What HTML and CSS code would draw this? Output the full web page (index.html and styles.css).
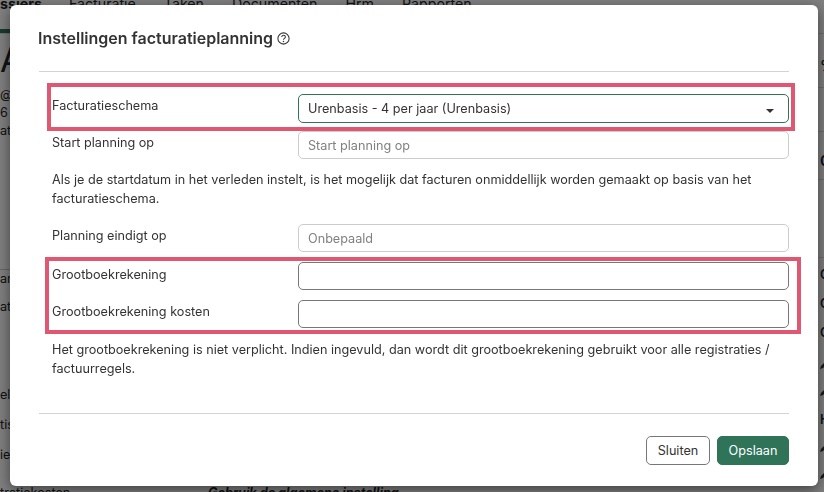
FILE: index.html
```html
<!DOCTYPE html>
<html lang="nl">
<head>
  <meta charset="UTF-8" />
  <title>Instellingen facturatieplanning</title>
  <link rel="stylesheet" href="styles.css">
</head>
<body>
  <div class="page">
    <nav class="topnav">
      <a class="active">ssiers</a>
      <a>Facturatie</a>
      <a>Taken</a>
      <a>Documenten</a>
      <a>Hrm</a>
      <a>Rapporten</a>
    </nav>

    <div class="page-main">
      <div class="side-left">
        <div class="left-title">A</div>
        <div class="left-info">
          <div>@a</div>
          <div>6</div>
          <div>at</div>
        </div>
        <div class="left-rows">
          <div>an</div>
          <div>at</div>
        </div>
        <div class="left-rows left-rows-low">
          <div>el</div>
          <div>tis</div>
          <div>ie</div>
        </div>
      </div>
      <div class="side-right">
        <div class="right-cell right-cell-a">%</div>
        <div class="right-cell right-cell-b"></div>
        <div class="right-cell right-cell-c">0</div>
        <div class="right-cell right-cell-d"></div>
        <div class="right-list">
          <div>G</div>
          <div>G</div>
          <div>G</div>
        </div>
        <div class="right-tools">
          <svg class="pen" viewBox="0 0 10 10"><path d="M1 9l1-3 4-4 2 2-4 4z" /></svg>
          <svg class="pen" viewBox="0 0 10 10"><path d="M1 9l1-3 4-4 2 2-4 4z" /></svg>
          <div class="right-head">H</div>
          <svg class="pen" viewBox="0 0 10 10"><path d="M1 9l1-3 4-4 2 2-4 4z" /></svg>
          <svg class="pen" viewBox="0 0 10 10"><path d="M1 9l1-3 4-4 2 2-4 4z" /></svg>
        </div>
      </div>
    </div>

    <div class="page-bottom">
      <span class="bottom-label">tratiekosten</span>
      <span class="bottom-value">Gebruik de algemene instelling</span>
    </div>
  </div>

  <div class="backdrop"></div>

  <div class="modal">
    <div class="modal-header">
      <h2>Instellingen facturatieplanning</h2>
      <svg class="help-icon" viewBox="0 0 16 16">
        <circle cx="8" cy="8" r="6.9" />
        <path d="M5.8 6.2c0-1.3 1-2.1 2.3-2.1s2.2.8 2.2 1.9c0 1.7-2.3 1.8-2.3 3.5" />
        <circle class="help-dot" cx="8" cy="11.6" r="0.9" />
      </svg>
    </div>

    <div class="modal-body">
      <div class="form-row">
        <label>Facturatieschema</label>
        <div class="select">
          <span>Urenbasis - 4 per jaar (Urenbasis)</span>
          <i class="caret"></i>
        </div>
      </div>
      <div class="form-row form-row-start">
        <label>Start planning op</label>
        <input type="text" placeholder="Start planning op" />
      </div>
      <p class="note">Als je de startdatum in het verleden instelt, is het mogelijk dat facturen onmiddellijk worden gemaakt op basis van het facturatieschema.</p>
      <div class="form-row">
        <label>Planning eindigt op</label>
        <input type="text" placeholder="Onbepaald" />
      </div>
      <div class="form-row form-row-ledger">
        <label class="label-low">Grootboekrekening</label>
        <input class="strong" type="text" />
      </div>
      <div class="form-row form-row-ledger">
        <label>Grootboekrekening kosten</label>
        <input class="strong" type="text" />
      </div>
      <p class="note note-ledger">Het grootboekrekening is niet verplicht. Indien ingevuld, dan wordt dit grootboekrekening gebruikt voor alle registraties / factuurregels.</p>
    </div>

    <div class="modal-footer">
      <button class="btn-close">Sluiten</button>
      <button class="btn-save">Opslaan</button>
    </div>

    <div class="mark mark-schema"></div>
    <div class="mark mark-ledger"></div>
  </div>
</body>
</html>
```

FILE: styles.css
```css
* {
  box-sizing: border-box;
}

html, body {
  margin: 0;
  height: 100%;
  overflow: hidden;
}

body {
  font-family: Inter, "Liberation Sans", sans-serif;
  font-size: 12.65px;
  color: #212529;
  background: #fff;
}

/* pagina achter de modal */
.page {
  height: 492px;
  display: flex;
  flex-direction: column;
  overflow: hidden;
}

.topnav {
  height: 34px;
  flex: none;
  display: flex;
  font-size: 14.2px;
  line-height: 8px;
  border-bottom: 1px solid #ddd;
  white-space: nowrap;
}

.topnav a {
  margin-right: 28px;
}

.topnav .active {
  width: 41px;
  height: 33px;
  font-weight: 700;
  border-bottom: 4px solid #2f7359;
}

.page-main {
  flex: 1;
  display: flex;
  justify-content: space-between;
  overflow: hidden;
}

.side-left {
  width: 10px;
  display: flex;
  flex-direction: column;
  white-space: nowrap;
}

.left-title {
  height: 52px;
  line-height: 52px;
  font-size: 34px;
}

.left-info {
  line-height: 18px;
  height: 54px;
  margin-bottom: 129px;
}

.left-rows {
  display: flex;
  flex-direction: column;
  gap: 10px;
  line-height: 18px;
  border-top: 1px solid #ccc;
}

.left-rows-low {
  border-top: none;
  gap: 12px;
  margin-top: 70px;
}

.side-right {
  width: 6px;
  white-space: nowrap;
}

.right-cell {
  border-bottom: 1px solid #ddd;
  padding-left: 2px;
  font-weight: 600;
}

.right-cell-a {
  height: 54px;
  padding-top: 22px;
  font-size: 15px;
}

.right-cell-b {
  height: 44px;
}

.right-cell-c {
  height: 48px;
  padding-top: 19px;
  font-size: 15px;
  color: #1a1a2e;
}

.right-cell-d {
  height: 78px;
}

.right-list {
  display: flex;
  flex-direction: column;
  gap: 11px;
  margin-top: 8px;
  padding-left: 2px;
  line-height: 18px;
  font-weight: 600;
}

.right-tools {
  display: flex;
  flex-direction: column;
  align-items: flex-start;
  margin-top: 18px;
  padding-left: 1px;
  gap: 17px;
}

.right-head {
  font-weight: 600;
  line-height: 12px;
  padding-left: 1px;
}

.pen {
  width: 10px;
  height: 10px;
  flex: none;
  fill: #333;
}

.page-bottom {
  height: 8px;
  flex: none;
  display: flex;
  line-height: 18px;
  white-space: nowrap;
}

.bottom-label {
  width: 208px;
  flex: none;
}

.bottom-value {
  font-weight: 700;
  font-style: italic;
}

.backdrop {
  position: fixed;
  inset: 0;
  background: rgba(0, 0, 0, 0.5);
}

/* modal */
.modal {
  position: fixed;
  left: 10px;
  top: 5px;
  width: 808px;
  height: 481px;
  padding: 0 29px;
  background: #fff;
  border-radius: 6px;
  box-shadow: 0 4px 14px rgba(0, 0, 0, 0.5);
}

.modal-header {
  height: 67px;
  display: flex;
  align-items: center;
  gap: 4px;
  border-bottom: 1px solid #d4d4d4;
}

.modal-header h2 {
  margin: 0 0 0 -1px;
  font-size: 16px;
  font-weight: 600;
  color: #333;
}

.help-icon {
  width: 13px;
  height: 13px;
  fill: none;
  stroke: #333;
  stroke-width: 1.3;
}

.help-dot {
  fill: #333;
  stroke: none;
}

.modal-body {
  padding-top: 22px;
}

.form-row {
  display: flex;
}

.form-row label {
  width: 259px;
  padding-left: 13px;
  padding-top: 4px;
  line-height: 16px;
  color: #333;
}

.form-row .label-low {
  padding-top: 5px;
}

.form-row input,
.select {
  width: 491px;
  height: 28px;
  border: 1px solid #ccc;
  border-radius: 5px;
  padding: 0 9px;
  font: inherit;
  color: #333;
  background: #fff;
}

.form-row input::placeholder {
  color: #808080;
  opacity: 1;
}

.form-row input.strong {
  border-color: #777;
}

.select {
  height: 29px;
  display: flex;
  align-items: center;
  justify-content: space-between;
  border-color: #2f7359;
  padding-right: 14px;
}

.caret {
  width: 0;
  height: 0;
  margin-top: 4px;
  border-left: 4.5px solid transparent;
  border-right: 4.5px solid transparent;
  border-top: 4px solid #333;
}

.form-row-start {
  margin-top: 8px;
}

.form-row-ledger {
  margin-top: 10px;
}

.note {
  margin: 11px 0 16px;
  padding-left: 13px;
  line-height: 19px;
  color: #333;
}

.note-ledger {
  margin-top: 12px;
  margin-bottom: 0;
}

.modal-footer {
  position: absolute;
  left: 29px;
  right: 29px;
  top: 408px;
  height: 52px;
  display: flex;
  justify-content: flex-end;
  align-items: flex-end;
  gap: 7px;
  border-top: 1px solid #d4d4d4;
}

.modal-footer button {
  height: 29px;
  border-radius: 5px;
  font: inherit;
}

.btn-close {
  width: 64px;
  background: #fff;
  border: 1px solid #777;
  color: #333;
}

.btn-save {
  width: 72px;
  background: #2f7359;
  border: 1px solid #2f7359;
  color: #fff;
  font-weight: 500;
}

/* rode markeringen */
.mark {
  position: absolute;
  border: 4px solid #df5770;
  pointer-events: none;
}

.mark-schema {
  left: 37px;
  top: 78px;
  width: 748px;
  height: 48px;
}

.mark-ledger {
  left: 35px;
  top: 252px;
  width: 756px;
  height: 77px;
}
```
